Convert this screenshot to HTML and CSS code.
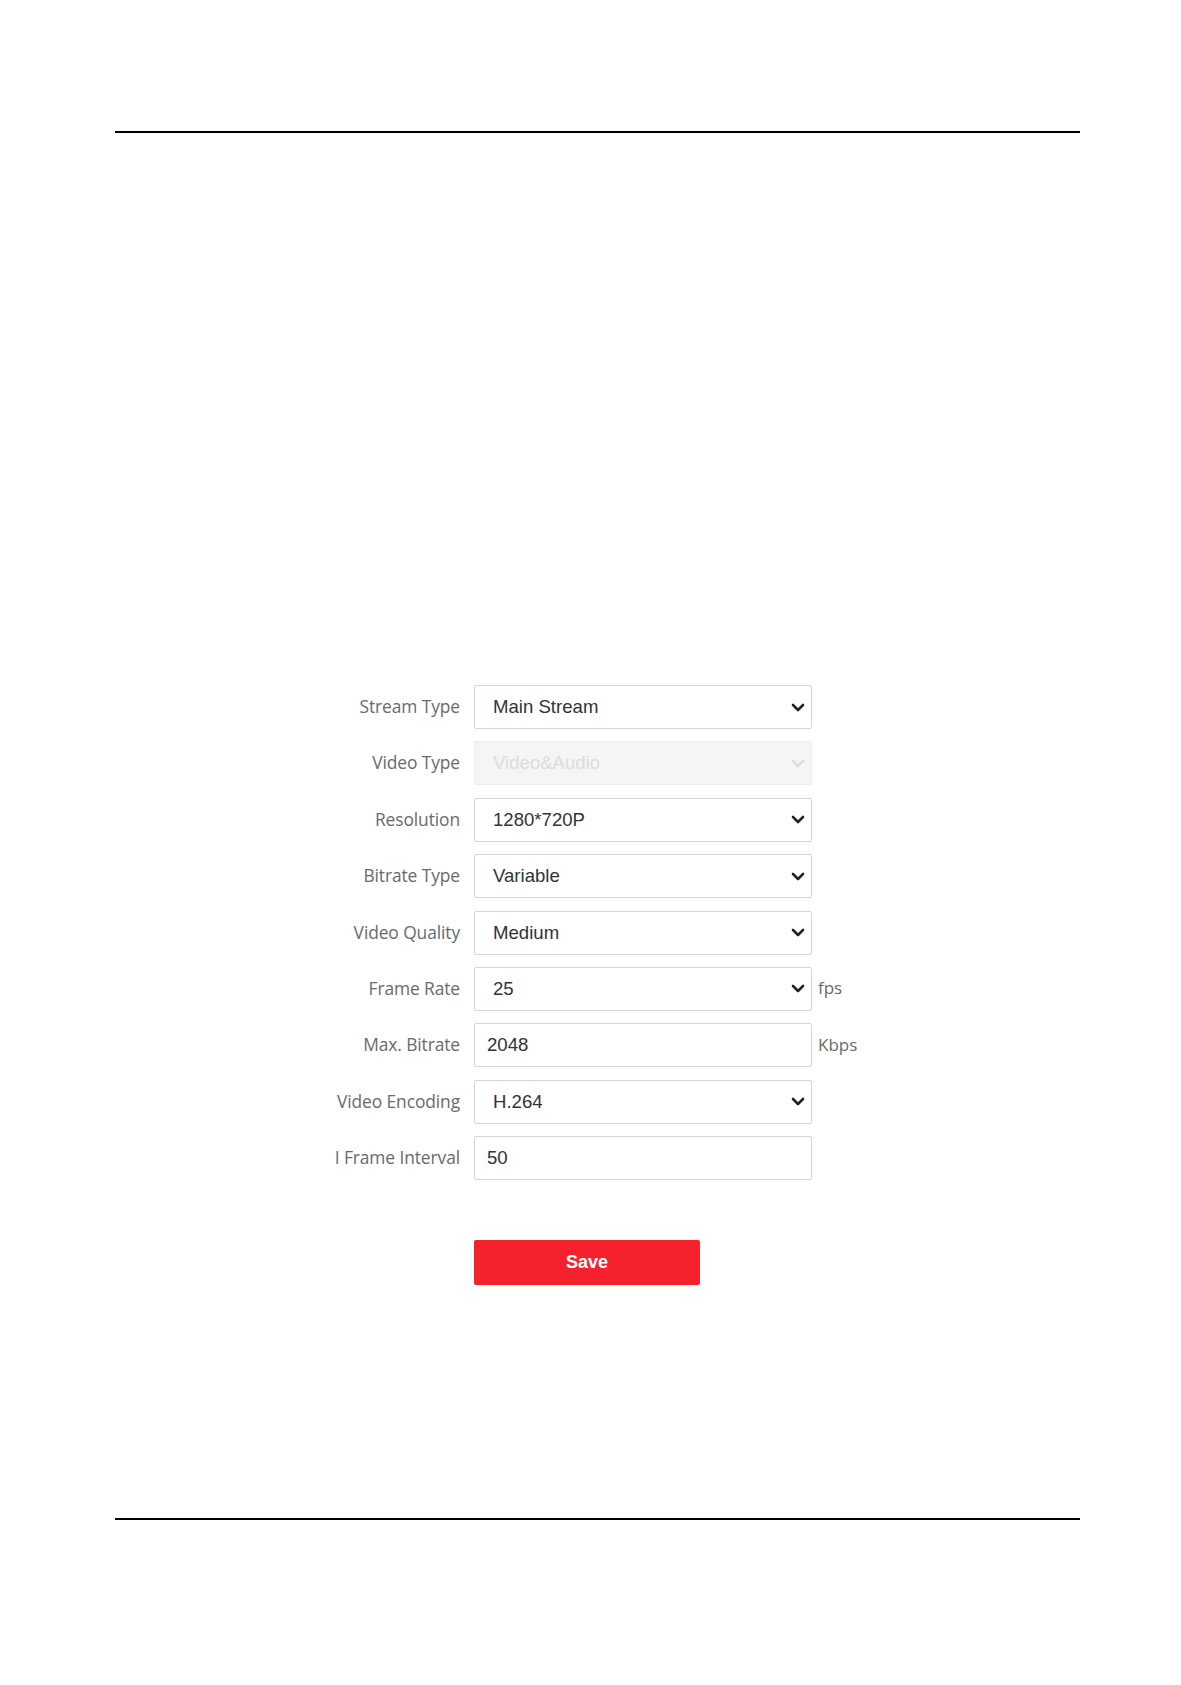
FILE: index.html
```html
<!DOCTYPE html>
<html lang="en">
<head>
    <meta charset="UTF-8">
    <meta name="viewport" content="width=device-width, initial-scale=1.0">
    <title>Video Settings</title>
    <link rel="stylesheet" href="styles.css">
</head>
<body>
    <div class="page">
        <hr class="rule rule-top">

        <form class="settings">
            <div class="row">
                <label class="label">Stream Type</label>
                <div class="box select">
                    <span class="value">Main Stream</span>
                    <svg class="chev" viewBox="0 0 14 9"><path d="M2 2 L7 7 L12 2" /></svg>
                </div>
                <span class="unit"></span>
            </div>
            <div class="row">
                <label class="label">Video Type</label>
                <div class="box select disabled">
                    <span class="value">Video&amp;Audio</span>
                    <svg class="chev" viewBox="0 0 14 9"><path d="M2 2 L7 7 L12 2" /></svg>
                </div>
                <span class="unit"></span>
            </div>
            <div class="row">
                <label class="label">Resolution</label>
                <div class="box select">
                    <span class="value">1280*720P</span>
                    <svg class="chev" viewBox="0 0 14 9"><path d="M2 2 L7 7 L12 2" /></svg>
                </div>
                <span class="unit"></span>
            </div>
            <div class="row">
                <label class="label">Bitrate Type</label>
                <div class="box select">
                    <span class="value">Variable</span>
                    <svg class="chev" viewBox="0 0 14 9"><path d="M2 2 L7 7 L12 2" /></svg>
                </div>
                <span class="unit"></span>
            </div>
            <div class="row">
                <label class="label">Video Quality</label>
                <div class="box select">
                    <span class="value">Medium</span>
                    <svg class="chev" viewBox="0 0 14 9"><path d="M2 2 L7 7 L12 2" /></svg>
                </div>
                <span class="unit"></span>
            </div>
            <div class="row">
                <label class="label">Frame Rate</label>
                <div class="box select">
                    <span class="value">25</span>
                    <svg class="chev" viewBox="0 0 14 9"><path d="M2 2 L7 7 L12 2" /></svg>
                </div>
                <span class="unit">fps</span>
            </div>
            <div class="row">
                <label class="label">Max. Bitrate</label>
                <div class="box text">
                    <span class="value">2048</span>
                </div>
                <span class="unit">Kbps</span>
            </div>
            <div class="row">
                <label class="label">Video Encoding</label>
                <div class="box select">
                    <span class="value">H.264</span>
                    <svg class="chev" viewBox="0 0 14 9"><path d="M2 2 L7 7 L12 2" /></svg>
                </div>
                <span class="unit"></span>
            </div>
            <div class="row">
                <label class="label">I Frame Interval</label>
                <div class="box text">
                    <span class="value">50</span>
                </div>
                <span class="unit"></span>
            </div>

            <div class="actions">
                <button type="button" class="save">Save</button>
            </div>
        </form>

        <hr class="rule rule-bottom">
    </div>
</body>
</html>
```

FILE: styles.css
```css
body {
    margin: 0;
    background: #ffffff;
    font-family: "Open Sans", "Noto Sans", sans-serif;
}

.page {
    width: 1181px;
    height: 1685px;
    padding-top: 131px;
    box-sizing: border-box;
}

.rule {
    margin: 0 0 0 115px;
    width: 965px;
    height: 2px;
    border: none;
    background: #000000;
}

.rule-bottom {
    margin-top: 233px;
}

.settings {
    margin-top: 552px;
    display: flex;
    flex-direction: column;
    gap: 12.4px;
}

.row {
    display: grid;
    grid-template-columns: 460px 338px 80px;
    column-gap: 14px;
    align-items: center;
    height: 44px;
}

.label {
    text-align: right;
    color: #6a6a6a;
    font-size: 17.4px;
    letter-spacing: -0.1px;
    white-space: nowrap;
    margin-top: -2px;
}

.unit {
    color: #6a6a6a;
    font-size: 17px;
    margin-left: -8px;
    margin-top: -2px;
}

.box {
    height: 44px;
    box-sizing: border-box;
    border: 1px solid #d4d4d4;
    border-radius: 2px;
    display: flex;
    align-items: center;
    font-family: "Liberation Sans", Arial, sans-serif;
    font-size: 18.6px;
    color: #333333;
    background: #ffffff;
}

.select {
    padding: 0 6px 0 18px;
    justify-content: space-between;
}

.text {
    padding: 0 12px;
}

.disabled {
    background: #f5f5f5;
    border-color: #ededed;
    color: #dcdcdc;
}

.chev {
    width: 14px;
    height: 9px;
    margin-right: 0;
}

.chev path {
    fill: none;
    stroke: #222222;
    stroke-width: 2.6;
    stroke-linecap: round;
    stroke-linejoin: round;
}

.disabled .chev path {
    stroke: #dddddd;
}

.actions {
    margin-top: 47px;
    padding-left: 474px;
}

.save {
    width: 226px;
    height: 45px;
    border: none;
    border-radius: 2px;
    background: #f5222d;
    color: #ffffff;
    font-family: "Liberation Sans", Arial, sans-serif;
    font-size: 18px;
    font-weight: bold;
    cursor: pointer;
}
```
